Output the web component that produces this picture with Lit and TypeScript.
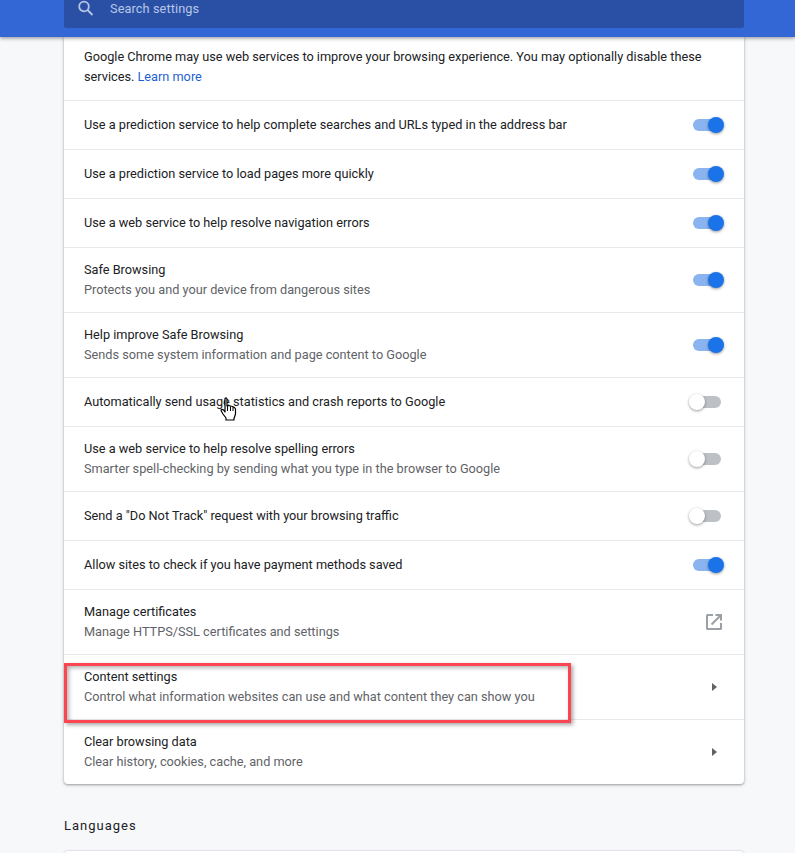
import { LitElement, html, css, nothing } from "lit";
import { customElement } from "lit/decorators.js";

type Row = { t: string; s?: string; a: "on" | "off" | "ext" | "arrow"; cls?: string };

const rows: Row[] = [
  { t: "Use a prediction service to help complete searches and URLs typed in the address bar", a: "on" },
  { t: "Use a prediction service to load pages more quickly", a: "on" },
  { t: "Use a web service to help resolve navigation errors", a: "on" },
  { t: "Safe Browsing", s: "Protects you and your device from dangerous sites", a: "on" },
  { t: "Help improve Safe Browsing", s: "Sends some system information and page content to Google", a: "on" },
  { t: "Automatically send usage statistics and crash reports to Google", a: "off" },
  { t: "Use a web service to help resolve spelling errors", s: "Smarter spell-checking by sending what you type in the browser to Google", a: "off" },
  { t: "Send a \"Do Not Track\" request with your browsing traffic", a: "off" },
  { t: "Allow sites to check if you have payment methods saved", a: "on" },
  { t: "Manage certificates", s: "Manage HTTPS/SSL certificates and settings", a: "ext" },
  { t: "Content settings", s: "Control what information websites can use and what content they can show you", a: "arrow" },
  { t: "Clear browsing data", s: "Clear history, cookies, cache, and more", a: "arrow" },
];

@customElement("app-root")
export class AppRoot extends LitElement {
  static styles = css`
    :host {
      display: block;
      position: relative;
      height: 853px;
      overflow: hidden;
      background: #f7f8fa;
      font-family: Roboto, "Liberation Sans", sans-serif;
      font-size: 12.73px;
      color: #202124;
    }
    .header {
      position: relative;
      z-index: 2;
      height: 37px;
      background: #3367d6;
      box-shadow: 0 1px 4px rgba(0, 0, 0, 0.45);
      padding: 0 51px 0 64px;
    }
    .search {
      height: 28px;
      background: #2a50a6;
      border-radius: 0 0 2px 2px;
      display: flex;
      align-items: flex-start;
      padding-left: 13px;
      gap: 15px;
      color: #b7c6e6;
      line-height: 17px;
      letter-spacing: 0.1px;
    }
    .search svg {
      display: block;
    }
    .main {
      padding: 0 51px 0 64px;
    }
    .card {
      background: #fff;
      border-radius: 0 0 4px 4px;
      box-shadow: 0 1px 2px rgba(60, 64, 67, 0.35), 0 1px 3px 1px rgba(60, 64, 67, 0.15);
    }
    .intro {
      height: 63px;
      box-sizing: border-box;
      padding: 10px 40px 0 20px;
      line-height: 20px;
    }
    .intro a {
      color: #1f5fd6;
      text-decoration: none;
    }
    .row {
      display: flex;
      align-items: center;
      justify-content: space-between;
      box-sizing: border-box;
      height: 49px;
      padding: 0 20px;
      border-top: 1px solid #e8eaed;
    }
    .row.two {
      height: 65px;
    }
    .title {
      line-height: 20px;
    }
    .sub {
      line-height: 20px;
      color: #5f6368;
    }
    .toggle {
      position: relative;
      flex: none;
      width: 28px;
      height: 12px;
      margin-right: 3px;
      border-radius: 6px;
    }
    .toggle.on {
      background: #8ab4f0;
    }
    .toggle.off {
      background: #bdc1c6;
    }
    .knob {
      position: absolute;
      top: -2px;
      width: 16px;
      height: 16px;
      border-radius: 50%;
      box-shadow: 0 1px 3px rgba(0, 0, 0, 0.4);
    }
    .toggle.on .knob {
      right: -3px;
      background: #1a73e8;
    }
    .toggle.off .knob {
      left: -4px;
      background: #fff;
    }
    .ext {
      flex: none;
      display: block;
      margin-right: 1px;
    }
    .arrow {
      flex: none;
      display: block;
      margin-right: 7px;
    }
    h2 {
      margin: 33px 0 0;
      font-size: 13px;
      font-weight: 400;
      line-height: 18px;
      letter-spacing: 1px;
      color: #202124;
    }
    .next {
      margin-top: 16px;
      height: 20px;
      background: #fff;
      border-radius: 4px 4px 0 0;
      box-shadow: 0 0 2px rgba(60, 64, 67, 0.35);
    }
    .mark {
      position: absolute;
      left: 64px;
      top: 663px;
      width: 507px;
      height: 60px;
      box-sizing: border-box;
      border: 3px solid #fb4550;
      box-shadow: 2px 2px 4px rgba(0, 0, 0, 0.35), inset 2px 2px 4px rgba(0, 0, 0, 0.3);
    }
    .cursor {
      position: absolute;
      left: 220px;
      top: 397px;
      display: block;
    }
  `;

  private action(a: Row["a"]) {
    if (a === "on" || a === "off") {
      return html`<div class="toggle ${a}"><div class="knob"></div></div>`;
    }
    if (a === "ext") {
      return html`<svg class="ext" width="18" height="18" viewBox="0 0 18 18" fill="none" stroke="#9aa0a6" stroke-width="2">
        <path d="M8 2H2.500a.5.5 0 0 0-.5.500V15.500a.5.5 0 0 0 .5.500H15.500a.5.5 0 0 0 .5-.500V10" />
        <path d="M6.500 11.500L15.500 2.500M10.500 2H16V7.500" />
      </svg>`;
    }
    return html`<svg class="arrow" width="5" height="8" viewBox="0 0 5 8"><path d="M0 0L5 4L0 8Z" fill="#5f6368" /></svg>`;
  }

  render() {
    return html`
      <div class="header">
        <div class="search">
          <svg width="18" height="18" viewBox="0 0 18 18" fill="none" stroke="#b7c6e6" stroke-width="1.800">
            <circle cx="7" cy="6.500" r="4.800" />
            <path d="M10.500 10L15.500 15" />
          </svg>
          <span>Search settings</span>
        </div>
      </div>
      <div class="main">
        <div class="card">
          <div class="intro">
            Google Chrome may use web services to improve your browsing experience. You may optionally disable these
            services. <a>Learn more</a>
          </div>
          ${rows.map(
            (r) => html`<div class="row ${r.s ? "two" : ""}">
              <div>
                <div class="title">${r.t}</div>
                ${r.s ? html`<div class="sub">${r.s}</div>` : nothing}
              </div>
              ${this.action(r.a)}
            </div>`
          )}
        </div>
        <h2>Languages</h2>
        <div class="next"></div>
      </div>
      <div class="mark"></div>
      <svg class="cursor" width="18" height="24" viewBox="0 0 18 24">
        <path
          d="M5 1.500C6 .500 7 1 7 2.500V9L8.500 8.500L10.500 9L12.500 9.500L14.500 10.500L15.500 12V17L14 21.500V23H6V21L3 17L1 13.500C1 12 2.500 12 3.500 13L5 15Z"
          fill="#fff"
          stroke="#000"
          stroke-width="1.200"
          stroke-linejoin="round"
        />
        <path d="M7.500 9V14M10.500 9.500V14M13 10V14" stroke="#000" stroke-width="1" fill="none" />
      </svg>
    `;
  }
}
